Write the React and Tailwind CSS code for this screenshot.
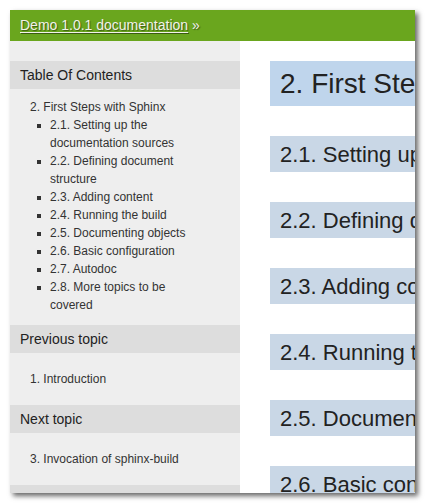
import React from "react";

const sub = [
  "2.1. Setting up the documentation sources",
  "2.2. Defining document structure",
  "2.3. Adding content",
  "2.4. Running the build",
  "2.5. Documenting objects",
  "2.6. Basic configuration",
  "2.7. Autodoc",
  "2.8. More topics to be covered",
];

const h2s = [
  "2.1. Setting up the documentation sources",
  "2.2. Defining document structure",
  "2.3. Adding content",
  "2.4. Running the build",
  "2.5. Documenting objects",
  "2.6. Basic configuration",
];

function SideHead({ children }) {
  return (
    <div className="h-[28px] bg-[#dddddd] pl-[10px] flex items-center text-[14px] text-[#222222]">
      {children}
    </div>
  );
}

export default function App() {
  return (
    <div
      className="w-[426px] h-[504px] bg-white overflow-hidden pt-[10px] pl-[10px]"
      style={{ fontFamily: '"Liberation Sans", Arial, sans-serif' }}
    >
      <div className="w-[405px] h-[483px] overflow-hidden flex flex-col bg-white shadow-[3px_3px_5px_rgba(0,0,0,0.6)]">
        <div className="h-[31px] shrink-0 bg-[#6aa61e] pl-[10px] flex items-center text-[14px] text-[#f2f2ea] [text-shadow:1px_1px_1px_rgba(0,0,0,0.45)] whitespace-nowrap">
          <span className="underline underline-offset-2">Demo 1.0.1 documentation</span>
          <span>&nbsp;»</span>
        </div>
        <div className="flex flex-1 min-h-0">
          <div className="w-[230px] shrink-0 bg-[#eeeeee] pt-[20px] text-[12px] leading-[18px] text-[#333333]">
            <SideHead>Table Of Contents</SideHead>
            <div className="pl-[10px] pt-[9px] pb-[11px]">
              <div className="pl-[10px]">2. First Steps with Sphinx</div>
              <ul>
                {sub.map((s) => (
                  <li key={s} className="flex">
                    <span className="w-[30px] shrink-0 flex justify-end pr-[9px]">
                      <span className="block w-[4px] h-[4px] mt-[8px] bg-[#333333]" />
                    </span>
                    <span className="w-[150px]">{s}</span>
                  </li>
                ))}
              </ul>
            </div>
            <SideHead>Previous topic</SideHead>
            <div className="pl-[20px] py-[17px]">1. Introduction</div>
            <SideHead>Next topic</SideHead>
            <div className="pl-[20px] py-[17px]">3. Invocation of sphinx-build</div>
            <SideHead>&nbsp;</SideHead>
          </div>
          <div className="flex-1 min-w-0 overflow-hidden pl-[30px] pt-[20px] text-[#222222]">
            <div className="h-[45px] bg-[#bfd5ec] pl-[10px] flex items-center text-[28px] whitespace-nowrap overflow-hidden">
              2. First Steps with Sphinx
            </div>
            {h2s.map((h) => (
              <div
                key={h}
                className="mt-[30px] h-[36px] bg-[#c9d7e6] pl-[10px] flex items-center text-[22px] whitespace-nowrap overflow-hidden"
              >
                {h}
              </div>
            ))}
          </div>
        </div>
      </div>
    </div>
  );
}
